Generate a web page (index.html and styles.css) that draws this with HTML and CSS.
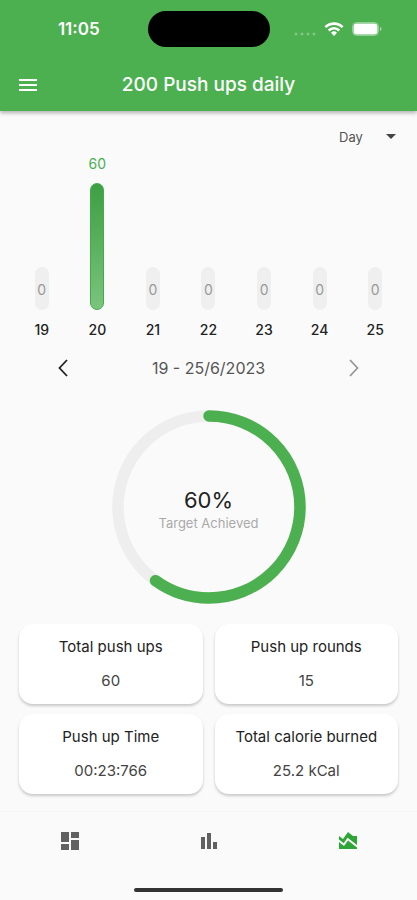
FILE: index.html
```html
<!DOCTYPE html>
<html lang="en">
<head>
<meta charset="utf-8">
<meta name="viewport" content="width=device-width, initial-scale=1">
<title>200 Push ups daily</title>
<link rel="stylesheet" href="styles.css">
</head>
<body>
<header class="header">
  <div class="status">
    <span class="status-time">11:05</span>
    <span class="island"></span>
    <span class="status-icons">
      <svg class="signal" width="22" height="4" viewBox="0 0 22 4" aria-hidden="true"><circle cx="2" cy="2" r="1.5"/><circle cx="8" cy="2" r="1.5"/><circle cx="14" cy="2" r="1.5"/><circle cx="20" cy="2" r="1.5"/></svg>
      <svg width="20" height="14" viewBox="0 0 20 14" aria-hidden="true"><g fill="none" stroke="#fff" stroke-width="2.6"><path d="M1.4 5.2a12.2 12.2 0 0 1 17.2 0"/><path d="M4.700 8.500a7.500 7.500 0 0 1 10.600 0"/></g><path fill="#fff" d="M10 14 7 10.800a4.300 4.300 0 0 1 6 0z"/></svg>
      <svg width="31" height="14" viewBox="0 0 31 14" aria-hidden="true"><rect x=".5" y=".5" width="26" height="13" rx="4" fill="none" stroke="#fff" stroke-opacity=".4"/><rect x="1.500" y="1.500" width="24" height="11" rx="3" fill="#fff"/><path d="M28 5v4c2-.6 2-3.400 0-4z" fill="#fff" fill-opacity=".5"/></svg>
    </span>
  </div>
  <div class="titlebar">
    <button class="menu" type="button" aria-label="Menu">
      <svg width="18" height="12" viewBox="0 0 18 12" aria-hidden="true"><path fill="#fff" d="M0 0h18v2H0zM0 5h18v2H0zM0 10h18v2H0z"/></svg>
    </button>
    <h1 class="title">200 Push ups daily</h1>
  </div>
</header>

<main class="main">
  <div class="filter">
    <select class="period" aria-label="Period">
      <option>Day</option>
      <option>Week</option>
      <option>Month</option>
    </select>
    <svg class="caret" width="10" height="5" viewBox="0 0 10 5" aria-hidden="true"><path fill="#444" d="M0 0h10L5 5z"/></svg>
  </div>

  <section class="chart" aria-label="Push ups per day">
    <div class="day"><span class="bar">0</span><span class="date">19</span></div>
    <div class="day"><span class="count">60</span><span class="bar bar-active"></span><span class="date">20</span></div>
    <div class="day"><span class="bar">0</span><span class="date">21</span></div>
    <div class="day"><span class="bar">0</span><span class="date">22</span></div>
    <div class="day"><span class="bar">0</span><span class="date">23</span></div>
    <div class="day"><span class="bar">0</span><span class="date">24</span></div>
    <div class="day"><span class="bar">0</span><span class="date">25</span></div>
  </section>

  <nav class="range" aria-label="Week">
    <button class="arrow" type="button" aria-label="Previous week">
      <svg width="10" height="18" viewBox="0 0 10 18" aria-hidden="true"><path d="M9 1 1.500 9 9 17" fill="none" stroke="#222" stroke-width="1.800"/></svg>
    </button>
    <span class="range-text">19 - 25/6/2023</span>
    <button class="arrow" type="button" aria-label="Next week">
      <svg width="10" height="18" viewBox="0 0 10 18" aria-hidden="true"><path d="M1 1 8.500 9 1 17" fill="none" stroke="#999" stroke-width="1.800"/></svg>
    </button>
  </nav>

  <section class="ring">
    <svg class="ring-art" width="194" height="194" viewBox="0 0 194 194" aria-hidden="true">
      <circle cx="97" cy="97" r="91" fill="none" stroke="#eee" stroke-width="11.500"/>
      <circle cx="97" cy="97" r="91" fill="none" stroke="#4caf50" stroke-width="11.500" stroke-linecap="round" pathLength="100" stroke-dasharray="60 100" transform="rotate(-90 97 97)"/>
    </svg>
    <div class="ring-label">
      <strong class="percent">60%</strong>
      <span class="target">Target Achieved</span>
    </div>
  </section>

  <section class="stats">
    <div class="card"><h2 class="card-name">Total push ups</h2><p class="card-value">60</p></div>
    <div class="card"><h2 class="card-name">Push up rounds</h2><p class="card-value">15</p></div>
    <div class="card"><h2 class="card-name">Push up Time</h2><p class="card-value">00:23:766</p></div>
    <div class="card"><h2 class="card-name">Total calorie burned</h2><p class="card-value">25.2 kCal</p></div>
  </section>
</main>

<footer class="footer">
  <nav class="tabs" aria-label="Main">
    <a class="tab" href="#home" aria-label="Dashboard">
      <svg width="18" height="18" viewBox="0 0 18 18" aria-hidden="true"><path fill="#616161" d="M0 0h8v10H0zM10 0h8v6h-8zM0 12h8v6H0zM10 8h8v10h-8z"/></svg>
    </a>
    <a class="tab" href="#charts" aria-label="Charts">
      <svg width="16" height="16" viewBox="0 0 16 16" aria-hidden="true"><path fill="#616161" d="M0 4h4v12H0zM6 0h4v16H6zM12 9h4v7h-4z"/></svg>
    </a>
    <a class="tab" href="#stats" aria-label="Statistics" aria-current="page">
      <svg width="24" height="24" viewBox="0 0 24 24" aria-hidden="true"><path fill="#2fa437" d="M3 13v7h18v-1.500l-9-7L8 17l-5-4zM3 7l4 3 5-7 5 4h4v8.970l-9.400-7.310-3.980 5.480L3 10.440V7z"/></svg>
    </a>
  </nav>
  <span class="home-bar"></span>
</footer>
</body>
</html>
```
FILE: styles.css
```css
* {
  box-sizing: border-box;
}

body {
  margin: 0;
  min-height: 100vh;
  display: flex;
  flex-direction: column;
  background: #fafafa;
  color: #222;
  font-family: Inter, "Liberation Sans", sans-serif;
}

h1, h2, p {
  margin: 0;
  font-weight: 400;
}

button {
  padding: 0;
  border: 0;
  background: none;
}

svg {
  display: block;
}

.header {
  height: 111px;
  background: #4caf50;
  color: #fff;
  box-shadow: 0 2px 4px rgba(0, 0, 0, 0.3);
}

.status {
  height: 58px;
  display: grid;
  grid-template-columns: 1fr 122px 1fr;
  align-items: center;
}

.status-time {
  padding-left: 10px;
  text-align: center;
  font-size: 17px;
  font-weight: 600;
}

.island {
  height: 36px;
  border-radius: 18px;
  background: #000;
}

.status-icons {
  display: flex;
  justify-content: flex-end;
  align-items: center;
  gap: 8px;
  padding-right: 34px;
}

.signal {
  align-self: flex-end;
  fill: rgba(255, 255, 255, 0.3);
}

.titlebar {
  height: 53px;
  display: grid;
  grid-template-columns: 56px 1fr 56px;
  align-items: center;
}

.menu {
  height: 48px;
  padding-left: 19px;
}

.title {
  text-align: center;
  font-size: 19px;
  font-weight: 500;
}

.main {
  flex: 1;
}

.filter {
  position: relative;
  height: 36px;
  margin-top: 8px;
  padding-right: 18px;
  display: flex;
  justify-content: flex-end;
  align-items: center;
}

.period {
  appearance: none;
  width: 60px;
  height: 28px;
  padding: 0;
  border: 0;
  background: none;
  color: #555;
  font: 400 13px Inter, sans-serif;
}

.caret {
  position: absolute;
  right: 21px;
  top: 15px;
  pointer-events: none;
}

.chart {
  height: 184px;
  padding: 0 14px;
  display: grid;
  grid-template-columns: repeat(7, 1fr);
}

.day {
  display: flex;
  flex-direction: column;
  justify-content: flex-end;
  align-items: center;
}

.count {
  margin-bottom: 11px;
  color: #4caf50;
  font-size: 14px;
  line-height: 16px;
}

.bar {
  width: 14px;
  height: 43px;
  border-radius: 7px;
  background: #efefef;
  color: #999;
  font-size: 14px;
  line-height: 46px;
  text-align: center;
}

.bar-active {
  height: 127px;
  border: 1px solid #43ac49;
  background: linear-gradient(#3c9f42, #7bc47f);
}

.date {
  margin-top: 11px;
  font-size: 14px;
  font-weight: 500;
  line-height: 18px;
}

.range {
  height: 58px;
  padding: 0 48px;
  display: flex;
  justify-content: space-between;
  align-items: center;
}

.arrow {
  width: 30px;
  height: 30px;
  display: grid;
  place-items: center;
}

.range-text {
  color: #555;
  font-size: 16px;
}

.ring {
  margin-top: 13px;
  display: grid;
  place-items: center;
}

.ring-art,
.ring-label {
  grid-area: 1 / 1;
}

.ring-label {
  padding-top: 4px;
  display: flex;
  flex-direction: column;
  align-items: center;
}

.percent {
  font-size: 22px;
  font-weight: 400;
  line-height: 28px;
}

.target {
  color: #aaa;
  font-size: 13px;
  line-height: 18px;
}

.stats {
  padding: 20px 19px 0;
  display: grid;
  grid-template-columns: 1fr 1fr;
  gap: 10px 12px;
}

.card {
  height: 80px;
  padding-top: 13px;
  border-radius: 14px;
  background: #fff;
  box-shadow: 0 2px 3px rgba(0, 0, 0, 0.2);
  text-align: center;
  line-height: 20px;
}

.card-name {
  font-size: 15px;
}

.card-value {
  margin-top: 14px;
  color: #444;
  font-size: 15px;
}

.footer {
  border-top: 1px solid #f5f5f5;
}

.tabs {
  height: 58px;
  display: grid;
  grid-template-columns: repeat(3, 1fr);
}

.tab {
  display: grid;
  place-items: center;
}

.home-bar {
  display: block;
  width: 149px;
  height: 4px;
  margin: 18px auto 8px;
  border-radius: 2px;
  background: #333;
}
```
